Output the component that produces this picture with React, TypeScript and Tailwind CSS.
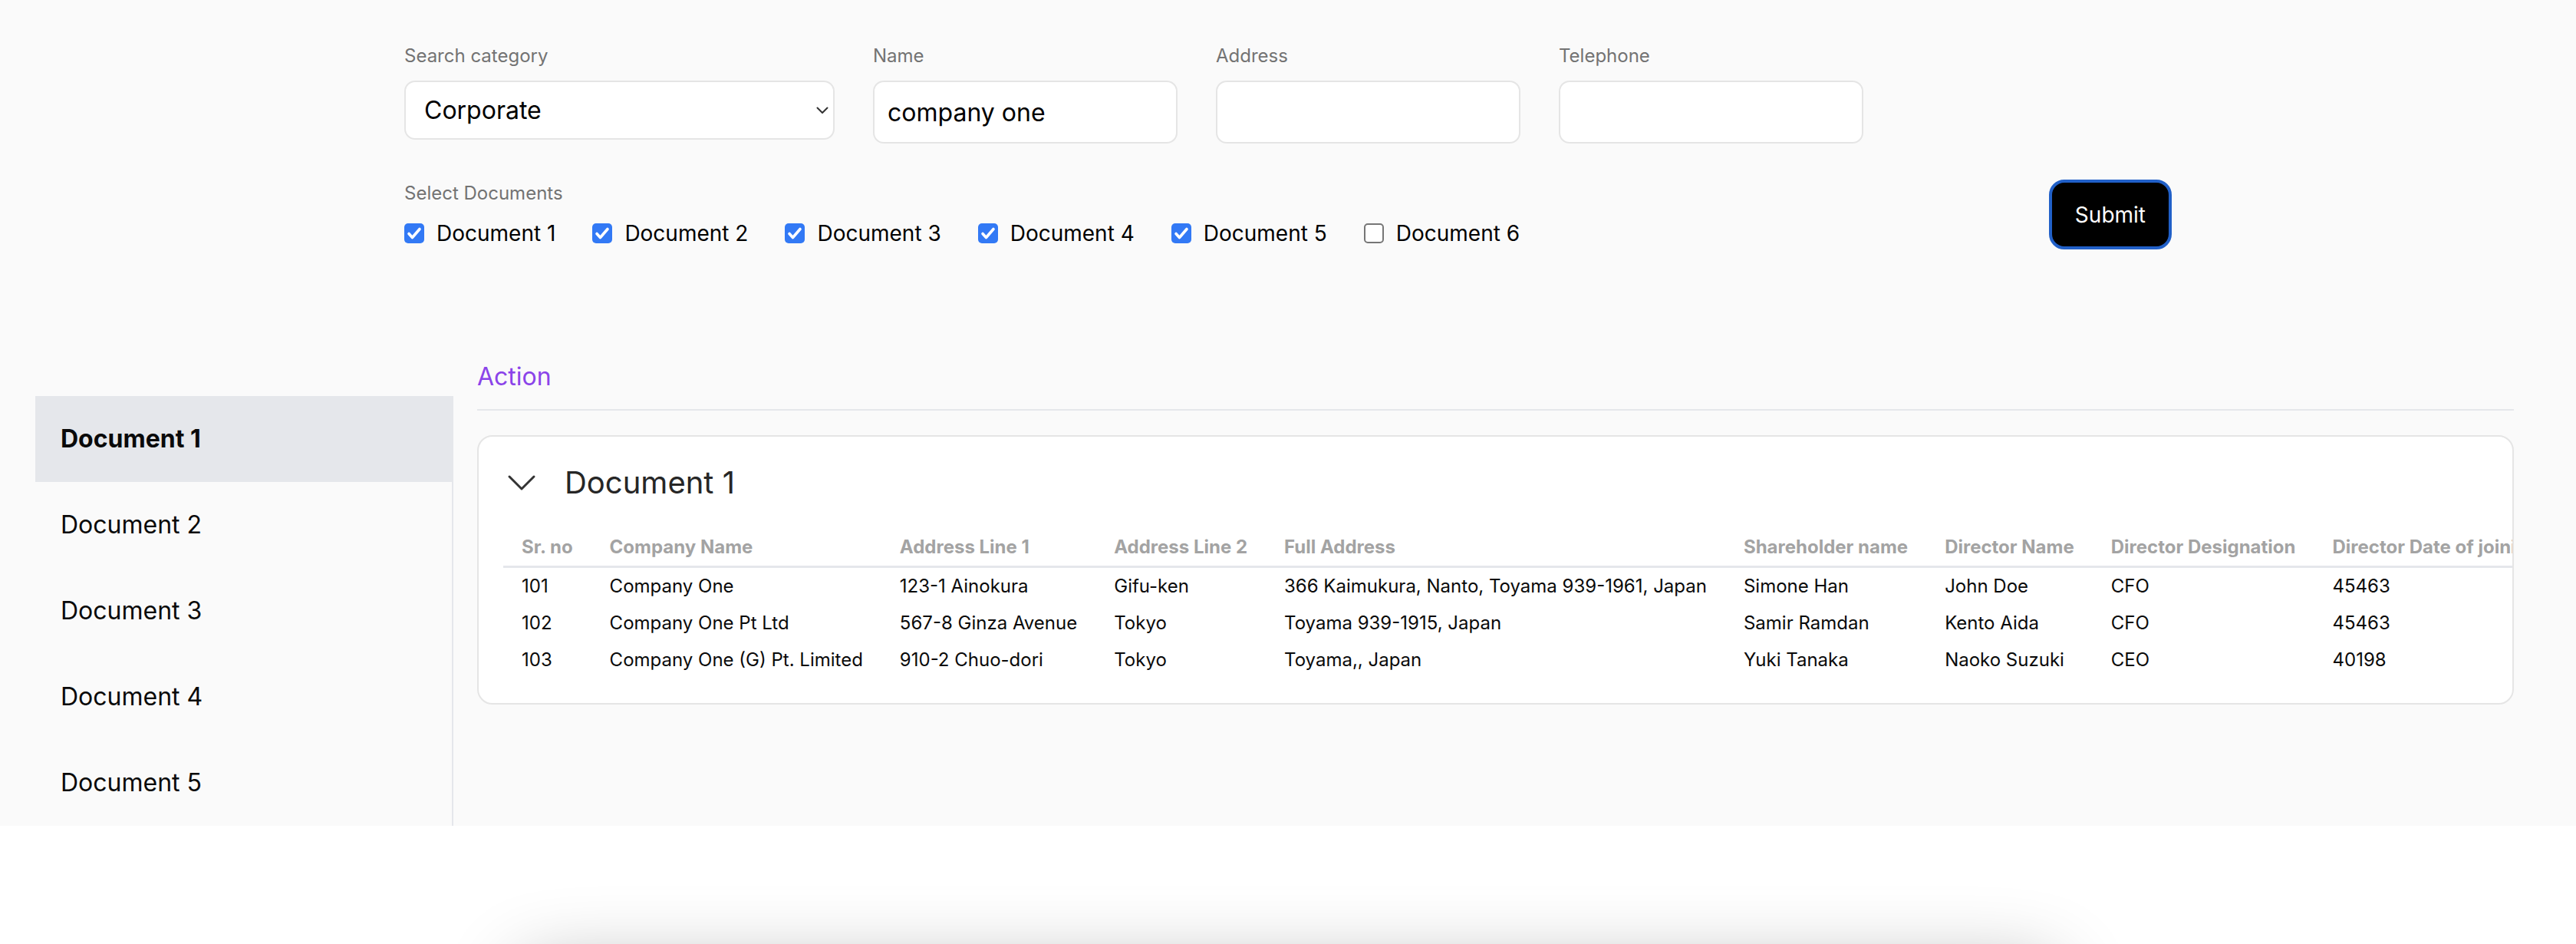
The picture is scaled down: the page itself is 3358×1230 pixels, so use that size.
import { useState } from 'react';

const documents = ['Document 1', 'Document 2', 'Document 3', 'Document 4', 'Document 5', 'Document 6'];

const columns = [
  'Sr. no',
  'Company Name',
  'Address Line 1',
  'Address Line 2',
  'Full Address',
  'Shareholder name',
  'Director Name',
  'Director Designation',
  'Director Date of joining',
];

const rows = [
  ['101', 'Company One', '123-1 Ainokura', 'Gifu-ken', '366 Kaimukura, Nanto, Toyama 939-1961, Japan', 'Simone Han', 'John Doe', 'CFO', '45463'],
  ['102', 'Company One Pt Ltd', '567-8 Ginza Avenue', 'Tokyo', 'Toyama 939-1915, Japan', 'Samir Ramdan', 'Kento Aida', 'CFO', '45463'],
  ['103', 'Company One (G) Pt. Limited', '910-2 Chuo-dori', 'Tokyo', 'Toyama,, Japan', 'Yuki Tanaka', 'Naoko Suzuki', 'CEO', '40198'],
];

function Field({ label, width, value }: { label: string; width: string; value?: string }) {
  return (
    <div className="flex flex-col">
      <label className="mb-[16px] text-[24px] leading-[32px] text-[#737373]">{label}</label>
      <input
        defaultValue={value}
        className={`${width} h-[82px] rounded-[14px] border-2 border-[#e5e5e5] bg-white px-[17px] text-[32px] text-black outline-none`}
      />
    </div>
  );
}

function Checkbox({ checked, label, onToggle }: { checked: boolean; label: string; onToggle: () => void }) {
  return (
    <label className="flex cursor-pointer items-center gap-[16px]" onClick={onToggle}>
      {checked ? (
        <span className="flex h-[26px] w-[26px] items-center justify-center rounded-[5px] bg-[#3279f5]">
          <svg width="26" height="26" viewBox="0 0 26 26">
            <polyline points="6,13.5 10.5,18.5 20,7.5" fill="none" stroke="white" strokeWidth="3.6" strokeLinecap="round" strokeLinejoin="round" />
          </svg>
        </span>
      ) : (
        <span className="h-[26px] w-[26px] rounded-[5px] border-2 border-[#767676] bg-white" />
      )}
      <span className="text-[28px] leading-[40px] text-black">{label}</span>
    </label>
  );
}

export default function App() {
  const [selected, setSelected] = useState<boolean[]>([true, true, true, true, true, false]);
  const [activeDoc, setActiveDoc] = useState(0);

  const toggle = (i: number) => setSelected((s) => s.map((v, idx) => (idx === i ? !v : v)));

  return (
    <div className="min-h-screen overflow-hidden bg-white font-['Inter',sans-serif]">
      <div className="bg-[#fafafa]">
        {/* Search form */}
        <div className="mx-auto max-w-[2304px] pt-[57px]">
          <div className="flex gap-[50px]">
            <div className="flex flex-col">
              <label className="mb-[16px] text-[24px] leading-[32px] text-[#737373]">Search category</label>
              <div className="relative w-[561px]">
                <select
                  defaultValue="Corporate"
                  className="h-[77px] w-full appearance-none rounded-[14px] border-2 border-[#e5e5e5] bg-white pl-[24px] text-[32px] text-black outline-none"
                >
                  <option>Corporate</option>
                  <option>Individual</option>
                </select>
                <svg className="pointer-events-none absolute right-[8px] top-1/2 -translate-y-1/2" width="16" height="10" viewBox="0 0 16 10">
                  <polyline points="1.5,1.5 8,8 14.5,1.5" fill="none" stroke="#333" strokeWidth="2" strokeLinecap="round" strokeLinejoin="round" />
                </svg>
              </div>
            </div>
            <Field label="Name" width="w-[397px]" value="company one" />
            <Field label="Address" width="w-[397px]" />
            <Field label="Telephone" width="w-[397px]" />
          </div>

          <div className="mt-[47px] flex items-center justify-between">
            <div>
              <div className="mb-[16px] text-[24px] leading-[32px] text-[#737373]">Select Documents</div>
              <div className="flex gap-[48px]">
                {documents.map((d, i) => (
                  <Checkbox key={d} label={d} checked={selected[i]} onToggle={() => toggle(i)} />
                ))}
              </div>
            </div>
            <button className="h-[91px] rounded-[20px] border-4 border-[#2160c8] bg-black px-[30px] text-[28px] text-white">
              Submit
            </button>
          </div>
        </div>

        {/* Results */}
        <div className="mt-[110px] flex items-start px-[46px]">
          <div className="mt-[81px] w-[545px] shrink-0 border-r-2 border-[#e5e7eb]">
            {documents.slice(0, 5).map((d, i) => (
              <div
                key={d}
                onClick={() => setActiveDoc(i)}
                className={`flex h-[112px] cursor-pointer items-center px-[33px] text-[32px] text-[#0a0a0a] ${
                  activeDoc === i ? 'bg-[#e5e7eb] font-bold' : ''
                }`}
              >
                {d}
              </div>
            ))}
          </div>

          <div className="min-w-0 flex-1 pl-[31px] pr-[35px] pt-[32px]">
            <div className="border-b-2 border-[#e5e7eb] pb-[18px]">
              <span className="text-[32px] leading-[48px] text-[#8b44e9]">Action</span>
            </div>

            <div className="mt-[32px] overflow-hidden rounded-[20px] border-2 border-[#e5e5e5] bg-white pb-[32px] pl-[32px] pt-[32px]">
              <div className="flex h-[56px] items-center gap-[32px]">
                <svg width="48" height="48" viewBox="0 0 48 48">
                  <polyline points="8,16 24,32 40,16" fill="none" stroke="#333" strokeWidth="3" strokeLinecap="round" strokeLinejoin="round" />
                </svg>
                <span className="text-[40px] leading-[56px] text-[#262626]">{documents[activeDoc]}</span>
              </div>

              <div className="mt-[32px] overflow-hidden">
                <table className="w-max border-collapse whitespace-nowrap text-left">
                  <thead>
                    <tr>
                      {columns.map((c) => (
                        <th key={c} className="border-b-[3px] border-[#e5e7eb] px-[24px] py-[8px] text-[24px] font-bold leading-[32px] text-[#a3a3a3]">
                          {c}
                        </th>
                      ))}
                    </tr>
                  </thead>
                  <tbody>
                    {rows.map((r) => (
                      <tr key={r[0]}>
                        {r.map((cell, j) => (
                          <td key={j} className="px-[24px] py-[8px] text-[24px] leading-[32px] text-[#0a0a0a]">
                            {cell}
                          </td>
                        ))}
                      </tr>
                    ))}
                  </tbody>
                </table>
              </div>
            </div>
          </div>
        </div>
      </div>

      <div className="mx-auto mt-[184px] h-[200px] w-[2000px] rounded-[24px] bg-white shadow-[0_0_100px_rgba(0,0,0,0.3)]" />
    </div>
  );
}
